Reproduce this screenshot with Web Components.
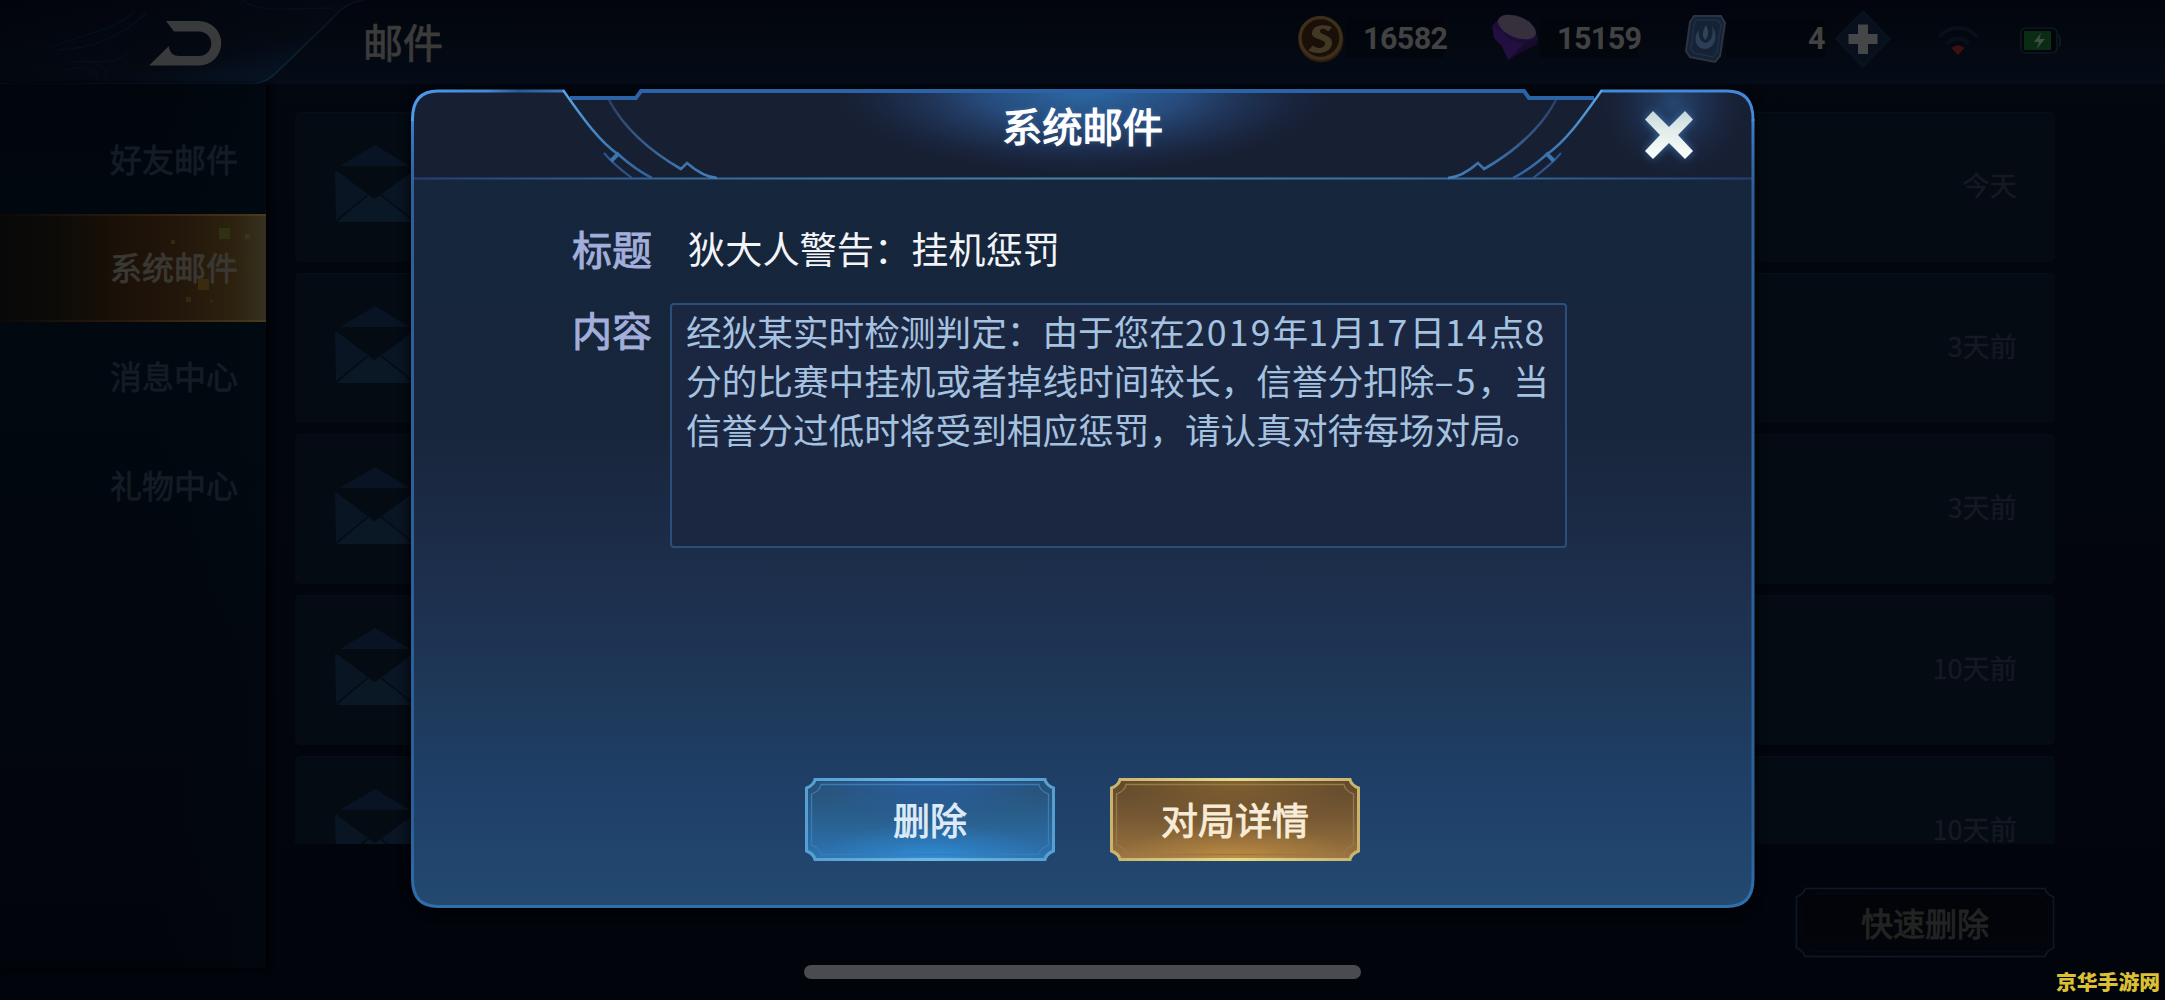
<!DOCTYPE html>
<html lang="zh-CN">
<head>
<meta charset="UTF-8">
<title>邮件</title>
<style>
  html, body {
    margin: 0;
    background: #02050d;
  }
  body {
    width: 2165px;
    height: 1000px;
    overflow: hidden;
    font-family: "Noto Sans CJK SC", sans-serif;
  }
</style>
</head>
<body>
<mail-app>
  <top-bar slot="top">
    <span slot="title">邮件</span>
    <currency-item icon="coin" value="16582"></currency-item>
    <currency-item icon="gem" value="15159"></currency-item>
    <currency-item icon="card" value="4" plus></currency-item>
    <status-icons></status-icons>
  </top-bar>
  <side-menu slot="side">
    <side-item>好友邮件</side-item>
    <side-item selected>系统邮件</side-item>
    <side-item>消息中心</side-item>
    <side-item>礼物中心</side-item>
  </side-menu>
  <mail-row date="今天">狄大人警告：挂机惩罚</mail-row>
  <mail-row date="3天前">荣耀称号通知邮件</mail-row>
  <mail-row date="3天前">战队赛周报</mail-row>
  <mail-row date="10天前">荣耀称号通知邮件</mail-row>
  <mail-row date="10天前">战队赛周报</mail-row>
  <game-button slot="footer" kind="dark">快速删除</game-button>
</mail-app>

<mail-dialog>
  <span slot="heading">系统邮件</span>
  <dialog-field label="标题">狄大人警告：挂机惩罚</dialog-field>
  <dialog-field label="内容" boxed>
    <text-line>经狄某实时检测判定：由于您在<b>2019</b>年<b>1</b>月<b>17</b>日<b>14</b>点<b>8</b></text-line>
    <text-line>分的比赛中挂机或者掉线时间较长，信誉分扣除<b>–5</b>，当</text-line>
    <text-line>信誉分过低时将受到相应惩罚，请认真对待每场对局。</text-line>
  </dialog-field>
  <game-button slot="actions" kind="blue">删除</game-button>
  <game-button slot="actions" kind="gold">对局详情</game-button>
</mail-dialog>

<home-indicator></home-indicator>
<site-mark>京华手游网</site-mark>

<script>
const icons = {
  coin: `
    <svg width="48" height="50" viewBox="0 0 48 50">
      <circle cx="24" cy="26" r="22.500" fill="#2a1d0d"/>
      <circle cx="23.500" cy="24" r="20.500" fill="#1b1009" stroke="#3d2f19" stroke-width="3.500"/>
      <path d="M35 13.500c-6-4-19-3-20 5c-1 8 15 6 13 12c-2 5-9 4-12 1l-5 5c7 4 21 4 24-6c2-10-13-9-12-14c1-3 6-2 8 1z" fill="#423924"/>
    </svg>`,
  gem: `
    <svg width="50" height="50" viewBox="0 0 50 50">
      <path d="M2 12L10 3L25 1L40 7L48 24L47 30L18 46L12 32L4 24z" fill="#1c0d38"/>
      <path d="M12 32L20 26L34 30L18 46z" fill="#211040"/>
      <path d="M34 30L48 24L47 30L18 46z" fill="#170a2b"/>
      <path d="M3 13L12 18L20 26L12 32L4 24z" fill="#220f42"/>
      <ellipse cx="27" cy="13" rx="20" ry="10.500" transform="rotate(22 27 13)" fill="#35303c"/>
    </svg>`,
  card: `
    <svg width="42" height="50" viewBox="0 0 42 50">
      <path d="M10 2L37 2L41 9L36 42L31 48L6 43L2 37L6 8z" fill="#162336" stroke="#2b343f" stroke-width="2"/>
      <path d="M12 6L34 6L37 11L33 38L29 43L10 39L7 35L10 11z" fill="none" stroke="#1e2f46" stroke-width="1.500"/>
      <path d="M15 16C8 24 12 35 21 35C31 34 35 22 28 12C30 22 27 28 21 29C16 27 14 23 15 16z" fill="#2b4057"/>
      <path d="M22 11C18 18 18 22 21 26C25 22 25 17 22 11z" fill="#2f455a"/>
    </svg>`
};

class MailApp extends HTMLElement {
  constructor() {
    super();
    this.attachShadow({ mode: "open" });
    this.shadowRoot.innerHTML = `
      <style>
        :host {
          display: grid;
          grid-template-rows: 84px 1fr;
          width: 2165px;
          height: 1000px;
          overflow: hidden;
          background: linear-gradient(#020710 0, #02060e 400px, #02040c 1000px);
        }
        .main {
          display: grid;
          grid-template-columns: 266px 1760px;
          column-gap: 29px;
          min-height: 0;
        }
        .list {
          display: flex;
          flex-direction: column;
          gap: 11px;
          margin-top: 27.500px;
          height: 732.500px;
          overflow: hidden;
        }
        .footer {
          display: flex;
          justify-content: flex-end;
          margin-top: 43px;
        }
      </style>
      <slot name="top"></slot>
      <div class="main">
        <slot name="side"></slot>
        <div>
          <div class="list"><slot></slot></div>
          <div class="footer"><slot name="footer"></slot></div>
        </div>
      </div>
    `;
  }
}
customElements.define("mail-app", MailApp);

class TopBar extends HTMLElement {
  constructor() {
    super();
    this.attachShadow({ mode: "open" });
    this.shadowRoot.innerHTML = `
      <style>
        :host {
          display: grid;
          grid-template-columns: 363px 933px 1fr;
          height: 84px;
          background: linear-gradient(#02050d, #03070f 40%, #050c18);
        }
        svg {
          display: block;
          overflow: visible;
        }
        .title {
          color: #3b3b3a;
          font-size: 40px;
          font-weight: 400;
          line-height: 82px;
          -webkit-text-stroke: 0.900px currentColor;
        }
        .right {
          display: flex;
        }
      </style>
      <svg width="363" height="86" viewBox="0 0 363 86">
        <defs>
          <linearGradient id="tab" x1="0" y1="0" x2="1" y2="1">
            <stop offset="0" stop-color="#02040b"/>
            <stop offset=".6" stop-color="#040912"/>
            <stop offset="1" stop-color="#0a1a30"/>
          </linearGradient>
          <linearGradient id="edge">
            <stop offset="0" stop-color="#06151e"/>
            <stop offset=".7" stop-color="#0c2b38"/>
            <stop offset="1" stop-color="#05101c"/>
          </linearGradient>
        </defs>
        <path d="M0 0H363C345 4 340 10 334 17L277 72Q265 84 250 84H0z" fill="url(#tab)"/>
        <path d="M363 0C345 4 340 10 334 17L277 72Q265 84 250 84H0" fill="none" stroke="url(#edge)" stroke-width="1.600"/>
        <g fill="none" stroke="#060f1c" stroke-width="1.300">
          <path d="M50 48C80 34 112 32 134 12M58 50C90 48 118 40 146 13M72 62C92 60 116 66 127 53M66 70C88 64 100 72 96 82M82 61C104 62 108 72 105 82"/>
          <path d="M242 0C262 14 286 8 334 8"/>
        </g>
        <path d="M166 21H199A22.250 22.250 0 0 1 199 65.500H149L169 46C169 52 173 56 179 56H199A12.250 12.250 0 0 0 199 31.500H174z" fill="#393a3b"/>
      </svg>
      <div class="title"><slot name="title"></slot></div>
      <div class="right"><slot></slot></div>
    `;
  }
}
customElements.define("top-bar", TopBar);

class CurrencyItem extends HTMLElement {
  constructor() {
    super();
    this.attachShadow({ mode: "open" });
  }

  connectedCallback() {
    const plus = this.hasAttribute("plus");
    this.shadowRoot.innerHTML = `
      <style>
        :host {
          display: flex;
          align-items: center;
          width: ${plus ? 244 : 194}px;
          height: 77px;
        }
        .icon {
          display: flex;
          justify-content: center;
          width: ${plus ? 42 : 50}px;
        }
        .value {
          box-sizing: border-box;
          width: ${plus ? 99 : 98}px;
          padding-left: 17px;
          height: 39px;
          background: rgba(0, 2, 8, 0.3);
          color: #424242;
          font: 700 30.500px/40px Roboto, sans-serif;
          letter-spacing: -0.600px;
          text-align: ${plus ? "right" : "left"};
        }
        .plus {
          margin-left: 9px;
        }
      </style>
      <div class="icon">${icons[this.getAttribute("icon")]}</div>
      <div class="value">${this.getAttribute("value")}</div>
      ${plus ? `
      <svg class="plus" width="58" height="60" viewBox="0 0 58 60">
        <path d="M29 2L56 30L29 58L2 30z" fill="#07101c" stroke="#0b141e" stroke-width="1.500"/>
        <path d="M24 15.500h10v9.500h9.500v10H34v10H24V35h-9.500V25H24z" fill="#444647"/>
      </svg>` : ""}
    `;
  }
}
customElements.define("currency-item", CurrencyItem);

class StatusIcons extends HTMLElement {
  constructor() {
    super();
    this.attachShadow({ mode: "open" });
    this.shadowRoot.innerHTML = `
      <style>
        :host {
          display: flex;
          align-items: center;
          gap: 41px;
          height: 82px;
          margin-left: 9px;
        }
      </style>
      <svg width="42" height="34" viewBox="0 0 42 34">
        <path d="M2 13C12 1 30 1 40 13" fill="none" stroke="#090f18" stroke-width="4"/>
        <path d="M10 20C16 13 26 13 32 20" fill="none" stroke="#090f18" stroke-width="4"/>
        <path d="M21 31L14.500 24Q21 18.500 27.500 24z" fill="#3c110e"/>
      </svg>
      <svg width="42" height="28" viewBox="0 0 42 28">
        <rect x="1" y="1" width="36" height="25" rx="5" fill="#02060b" stroke="#0d1820" stroke-width="1.600"/>
        <path d="M39 8Q41.500 14 39 20" fill="none" stroke="#0d1820" stroke-width="2"/>
        <rect x="4" y="4" width="27" height="19" rx="1" fill="#0a2b14"/>
        <path d="M21 6L14 15H19L16.500 22L25 12H19.500z" fill="#434c47"/>
      </svg>
    `;
  }
}
customElements.define("status-icons", StatusIcons);

class SideMenu extends HTMLElement {
  constructor() {
    super();
    this.attachShadow({ mode: "open" });
    this.shadowRoot.innerHTML = `
      <style>
        :host {
          display: flex;
          flex-direction: column;
          box-sizing: border-box;
          height: 884px;
          padding-top: 21px;
          background: linear-gradient(90deg, transparent 60%, rgba(3, 18, 28, 0.15)), linear-gradient(#01060d, #01080f 30%, #02060d 70%, #02040b);
          box-shadow: 3px 0 5px #000003;
        }
      </style>
      <slot></slot>
    `;
  }
}
customElements.define("side-menu", SideMenu);

class SideItem extends HTMLElement {
  constructor() {
    super();
    this.attachShadow({ mode: "open" });
    this.shadowRoot.innerHTML = `
      <style>
        :host {
          display: grid;
          box-sizing: border-box;
          height: 108.500px;
          padding-left: 110px;
          color: #131c25;
          font-size: 32px;
          line-height: 106px;
          -webkit-text-stroke: 0.800px currentColor;
        }
        :host([selected]) {
          color: #3a3833;
          border-top: 2px solid #2c2010;
          border-bottom: 2px solid #2d230f;
          line-height: 101px;
          background: linear-gradient(90deg, #080808 0, #0d0b08 60px, #191007 110px, #23160b 180px, #2d220f 235px, #373020 264px);
          border-image: linear-gradient(90deg, #0a0908, #2d1b0c 50%, #4a3b19) 1;
        }
        div, svg {
          grid-area: 1 / 1;
        }
        svg {
          display: none;
        }
        :host([selected]) svg {
          display: block;
        }
      </style>
      <svg width="156" height="104" viewBox="110 215 156 104">
        <path d="M219 227h11v11h-11z" fill="#2e3212"/>
        <path d="M245 233h5v5h-5z" fill="#33361a"/>
        <path d="M198 278h11v11h-11z" fill="#3a2a10"/>
        <path d="M171 239h4v4h-4zM186 296h5v5h-5zM245 261h5v5h-5zM210 299h3v3h-3z" fill="#352712"/>
      </svg>
      <div><slot></slot></div>
    `;
  }
}
customElements.define("side-item", SideItem);

class MailRow extends HTMLElement {
  constructor() {
    super();
    this.attachShadow({ mode: "open" });
  }

  connectedCallback() {
    this.shadowRoot.innerHTML = `
      <style>
        :host {
          display: flex;
          align-items: center;
          flex: none;
          box-sizing: border-box;
          height: 150.100px;
          padding: 0 38px 5px 40px;
          border-radius: 5px;
          background: #040b13;
          box-shadow: inset 0 1px #070e17;
        }
        .title {
          flex: 1;
          padding-left: 49px;
          color: #3c3c36;
          font-size: 31.700px;
          -webkit-text-stroke: 0.800px currentColor;
        }
        .date {
          color: #151922;
          font-size: 27.200px;
          -webkit-text-stroke: 0.400px currentColor;
        }
      </style>
      <svg width="80" height="78" viewBox="0 0 80 78">
        <path d="M5 21L40 0L75 21z" fill="#081423"/>
        <path d="M0 27Q0 25 2 26L38 53L1 76z" fill="#091523"/>
        <path d="M80 27Q80 25 78 26L41 53L79 76z" fill="#091523"/>
        <path d="M2 77L33 51L39 54L46 51L78 77z" fill="#0a1724"/>
        <path d="M2 75L33 50M78 75L46 50" stroke="#040b13" stroke-width="1.500"/>
      </svg>
      <div class="title"><slot></slot></div>
      <div class="date">${this.getAttribute("date")}</div>
    `;
  }
}
customElements.define("mail-row", MailRow);

class GameButton extends HTMLElement {
  constructor() {
    super();
    this.attachShadow({ mode: "open" });
  }

  connectedCallback() {
    const kind = this.getAttribute("kind");
    const themes = {
      blue: { w: 250, h: 83, top: "#284e72", mid: "#29608f", low: "#2d74b2", line: "#559fd3", line2: "#6fb8e2", inner: "#3a7db4", glow: "#2e93e2", glow2: "#2962ab", text: "#dceafa", size: 37 },
      gold: { w: 250, h: 83, top: "#5d482b", mid: "#785a34", low: "#9c7541", line: "#c9b36d", line2: "#e3dc8a", inner: "#99794a", glow: "#c8923f", glow2: "#8b6532", text: "#f9ecd6", size: 37 },
      dark: { w: 260, h: 71, top: "#02040a", mid: "#02040a", low: "#02050b", line: "#0c1825", line2: "#10192a", inner: "#05090f", glow: "#02050b", glow2: "#02040a", text: "#222422", size: 32 }
    };
    const t = themes[kind];
    const w = t.w;
    const h = t.h;
    // rectangle with its four corners bitten out
    const frame = (o, c) => `M${o + c} ${o}H${w - o - c}Q${w - o - c + 1} ${o + c - 3} ${w - o} ${o + c}V${h - o - c}Q${w - o - c + 1} ${h - o - c + 3} ${w - o - c} ${h - o}H${o + c}Q${o + c - 1} ${h - o - c + 3} ${o} ${h - o - c}V${o + c}Q${o + c - 1} ${o + c - 3} ${o + c} ${o}z`;
    this.shadowRoot.innerHTML = `
      <style>
        :host {
          display: grid;
          place-items: center;
          width: ${w}px;
          height: ${h}px;
          color: ${t.text};
          font-size: ${t.size}px;
          line-height: 1;
          cursor: pointer;
          -webkit-text-stroke: 0.900px currentColor;
        }
        svg, .label {
          grid-area: 1 / 1;
        }
        .label {
          padding-bottom: ${kind === "dark" ? 2 : 0}px;
        }
      </style>
      <svg width="${w}" height="${h}" viewBox="0 0 ${w} ${h}">
        <defs>
          <linearGradient id="fill" x2="0" y2="1">
            <stop offset="0" stop-color="${t.top}"/>
            <stop offset=".5" stop-color="${t.mid}"/>
            <stop offset="1" stop-color="${t.low}"/>
          </linearGradient>
          <linearGradient id="line">
            <stop offset="0" stop-color="${t.line}"/>
            <stop offset=".5" stop-color="${t.line2}"/>
            <stop offset="1" stop-color="${t.line}"/>
          </linearGradient>
          <radialGradient id="low" cx=".5" cy="1.05" r=".5">
            <stop offset="0" stop-color="${t.glow}"/>
            <stop offset=".5" stop-color="${t.glow}" stop-opacity=".35"/>
            <stop offset="1" stop-color="${t.glow}" stop-opacity="0"/>
          </radialGradient>
          <radialGradient id="high" cx=".5" cy="0" r=".5">
            <stop offset="0" stop-color="${t.glow2}" stop-opacity=".8"/>
            <stop offset="1" stop-color="${t.glow2}" stop-opacity="0"/>
          </radialGradient>
        </defs>
        <path d="${frame(1.5, 8.5)}" fill="url(#fill)"/>
        <path d="${frame(1.5, 8.5)}" fill="url(#low)"/>
        <path d="${frame(1.5, 8.5)}" fill="url(#high)"/>
        <path d="${frame(6.5, 9.5)}" fill="none" stroke="${t.inner}" stroke-width="1.300"/>
        <path d="${frame(1.5, 8.5)}" fill="none" stroke="url(#line)" stroke-width="${kind === "dark" ? 1.6 : 3}"/>
      </svg>
      <div class="label"><slot></slot></div>
    `;
  }
}
customElements.define("game-button", GameButton);

class TextLine extends HTMLElement {
  constructor() {
    super();
    this.attachShadow({ mode: "open" });
    this.shadowRoot.innerHTML = `
      <style>
        :host {
          display: block;
          height: 49px;
          line-height: 49px;
          white-space: nowrap;
        }
        ::slotted(b) {
          font-weight: 400;
          letter-spacing: 2.100px;
        }
      </style>
      <slot></slot>
    `;
  }
}
customElements.define("text-line", TextLine);

class DialogField extends HTMLElement {
  constructor() {
    super();
    this.attachShadow({ mode: "open" });
  }

  connectedCallback() {
    this.shadowRoot.innerHTML = `
      <style>
        :host {
          display: grid;
          grid-template-columns: 116px 1fr;
          height: 56px;
          margin-bottom: 25px;
        }
        :host([boxed]) {
          grid-template-columns: 98px 897px;
          height: 245px;
          margin: 0;
        }
        .label {
          color: #a3aedb;
          font-size: 40px;
          line-height: 52px;
          -webkit-text-stroke: 1px currentColor;
        }
        .value {
          color: #f2f4f7;
          font-size: 37.200px;
          line-height: 53px;
        }
        :host([boxed]) .value {
          box-sizing: border-box;
          padding: 1px 0 0 14px;
          border: 2px solid #2b4f7d;
          border-radius: 4px;
          background: #1b2740;
          color: #a5c2e0;
          font-size: 35.650px;
        }
      </style>
      <div class="label">${this.getAttribute("label")}</div>
      <div class="value"><slot></slot></div>
    `;
  }
}
customElements.define("dialog-field", DialogField);

class MailDialog extends HTMLElement {
  constructor() {
    super();
    this.attachShadow({ mode: "open" });
    this.shadowRoot.innerHTML = `
      <style>
        :host {
          position: absolute;
          top: 0;
          left: 0;
          box-sizing: border-box;
          display: flex;
          justify-content: center;
          align-items: flex-start;
          width: 2165px;
          height: 1000px;
          padding-top: 89px;
        }
        .panel {
          position: relative;
          display: grid;
          grid-template-rows: 90px 599px 1fr;
          width: 1345px;
          height: 819px;
        }
        .frame {
          position: absolute;
          inset: 0;
          overflow: visible;
          filter: drop-shadow(0 3px 6px #000);
        }
        header {
          position: relative;
          color: #fff;
          font-size: 40.300px;
          line-height: 71px;
          text-align: center;
          text-shadow: 0 0 5px rgba(110, 160, 230, 0.4);
          -webkit-text-stroke: 1.200px currentColor;
        }
        .body {
          position: relative;
          padding: 43px 0 0 162px;
        }
        .actions {
          position: relative;
          display: flex;
          justify-content: center;
          gap: 55px;
        }
      </style>
      <div class="panel">
        <svg class="frame" width="1345" height="819" viewBox="410 89 1345 819">
          <defs>
            <linearGradient id="body" gradientUnits="userSpaceOnUse" x1="0" y1="179" x2="0" y2="907">
              <stop offset="0" stop-color="#172840"/>
              <stop offset=".33" stop-color="#18283e"/>
              <stop offset=".42" stop-color="#1c2b46"/>
              <stop offset=".64" stop-color="#203658"/>
              <stop offset=".72" stop-color="#203d60"/>
              <stop offset=".85" stop-color="#21446f"/>
              <stop offset="1" stop-color="#254e78"/>
            </linearGradient>
            <linearGradient id="side" gradientUnits="userSpaceOnUse" x1="0" y1="90" x2="0" y2="907">
              <stop offset="0" stop-color="#4d9bec"/>
              <stop offset=".05" stop-color="#3878c4"/>
              <stop offset=".12" stop-color="#305f98"/>
              <stop offset=".9" stop-color="#2b609a"/>
              <stop offset="1" stop-color="#2f6fae"/>
            </linearGradient>
            <linearGradient id="rule" gradientUnits="userSpaceOnUse" x1="412" y1="0" x2="1753" y2="0">
              <stop offset="0" stop-color="#263f70"/>
              <stop offset=".2" stop-color="#34699c"/>
              <stop offset=".5" stop-color="#4686a4"/>
              <stop offset=".8" stop-color="#34699c"/>
              <stop offset="1" stop-color="#263f70"/>
            </linearGradient>
            <linearGradient id="cornerTop" gradientUnits="userSpaceOnUse" x1="412" y1="0" x2="564" y2="0">
              <stop offset="0" stop-color="#4d9bec"/>
              <stop offset=".5" stop-color="#4688d4"/>
              <stop offset=".7" stop-color="#2a5794"/>
              <stop offset="1" stop-color="#3a76b8"/>
            </linearGradient>
            <linearGradient id="slant" gradientUnits="userSpaceOnUse" x1="0" y1="90" x2="0" y2="178">
              <stop offset="0" stop-color="#5aa6e6"/>
              <stop offset="1" stop-color="#2f629c"/>
            </linearGradient>
            <linearGradient id="inner" gradientUnits="userSpaceOnUse" x1="0" y1="98" x2="0" y2="178">
              <stop offset="0" stop-color="#2c3d60"/>
              <stop offset=".6" stop-color="#365e92"/>
              <stop offset="1" stop-color="#447fb8"/>
            </linearGradient>
            <radialGradient id="glow" gradientUnits="userSpaceOnUse" cx="1083" cy="91" r="100" gradientTransform="translate(1083 91) scale(2.600 .86) translate(-1083 -91)">
              <stop offset="0" stop-color="#2c69a5"/>
              <stop offset=".4" stop-color="#284f82" stop-opacity=".9"/>
              <stop offset=".75" stop-color="#223860" stop-opacity=".4"/>
              <stop offset="1" stop-color="#171f33" stop-opacity="0"/>
            </radialGradient>
            <radialGradient id="closeGlow" gradientUnits="userSpaceOnUse" cx="1674" cy="104" r="76">
              <stop offset="0" stop-color="#26466f"/>
              <stop offset=".5" stop-color="#1f3152" stop-opacity=".7"/>
              <stop offset="1" stop-color="#1a2239" stop-opacity="0"/>
            </radialGradient>
            <linearGradient id="cross" x2="0" y2="1">
              <stop offset="0" stop-color="#c5d7d8"/>
              <stop offset=".4" stop-color="#e2ece9"/>
              <stop offset="1" stop-color="#fbfffc"/>
            </linearGradient>
            <filter id="halo" x="-50%" y="-50%" width="200%" height="200%">
              <feGaussianBlur stdDeviation="4.500"/>
            </filter>
          </defs>
          <path d="M412 178H1753V879Q1753 906 1727 906H438Q412 906 412 879z" fill="url(#body)" fill-opacity=".94"/>
          <path d="M412 179V119Q412 91 438 91H563L570 98H636L641 91H1524L1529 98H1595L1602 91H1727Q1753 91 1753 119V179z" fill="#171f33"/>
          <path d="M800 91H1366V178H800z" fill="url(#glow)"/>
          <path d="M1602 91H1727Q1753 91 1753 119V178H1560C1575 150 1590 110 1602 91z" fill="url(#closeGlow)"/>
          <path d="M412 178.500H1753" stroke="url(#rule)" stroke-width="2"/>
          <path d="M412.500 119V879Q412.500 906.500 438 906.500H1727Q1753 906.500 1753 879V119" fill="none" stroke="url(#side)" stroke-width="3"/>
          <path d="M412.500 121V119Q412.500 91 438 91H563" fill="none" stroke="url(#cornerTop)" stroke-width="3"/>
          <path d="M1602 91H1727Q1753 91 1753 119V121" fill="none" stroke="#4389d8" stroke-width="2.800"/>
          <path d="M570 98H636L641 91H1524L1529 98H1594" fill="none" stroke="#2c62a6" stroke-width="4"/>
          <g id="deco" fill="none">
            <path d="M563 90C584 120 600 142 619 155Q636 170 652 178" stroke="url(#slant)" stroke-width="2.400"/>
            <path d="M609 100C624 128 648 150 681 169L687 163Q703 177 717 178" stroke="url(#inner)" stroke-width="2.600"/>
            <path d="M604 153Q614 165 632 178" stroke="#2f568a" stroke-width="2"/>
            <path d="M619 153L611 161" stroke="#3a75b0" stroke-width="4"/>
          </g>
          <use href="#deco" transform="translate(2165 0) scale(-1 1)"/>
          <path d="M1653 111L1669 127L1685 111L1693 119.500L1678 135L1693 151L1685 159L1669 143L1653 159L1645 151L1660 135L1645 119.500z" fill="#4f92dd" opacity=".6" filter="url(#halo)"/>
          <path d="M1653 111L1669 127L1685 111L1693 119.500L1678 135L1693 151L1685 159L1669 143L1653 159L1645 151L1660 135L1645 119.500z" fill="url(#cross)"/>
        </svg>
        <header><slot name="heading"></slot></header>
        <div class="body"><slot></slot></div>
        <div class="actions"><slot name="actions"></slot></div>
      </div>
    `;
  }
}
customElements.define("mail-dialog", MailDialog);

class HomeIndicator extends HTMLElement {
  constructor() {
    super();
    this.attachShadow({ mode: "open" });
    this.shadowRoot.innerHTML = `
      <style>
        :host {
          position: absolute;
          top: 965px;
          left: 804px;
          display: block;
          width: 557px;
          height: 14px;
          border-radius: 7px;
          background: #494b51;
        }
      </style>
    `;
  }
}
customElements.define("home-indicator", HomeIndicator);

class SiteMark extends HTMLElement {
  constructor() {
    super();
    this.attachShadow({ mode: "open" });
    this.shadowRoot.innerHTML = `
      <style>
        :host {
          position: absolute;
          top: 970px;
          left: 2056px;
          display: block;
          color: #dcc034;
          font-size: 20.800px;
          font-weight: 900;
          line-height: 22px;
          white-space: nowrap;
        }
      </style>
      <slot></slot>
    `;
  }
}
customElements.define("site-mark", SiteMark);
</script>
</body>
</html>
